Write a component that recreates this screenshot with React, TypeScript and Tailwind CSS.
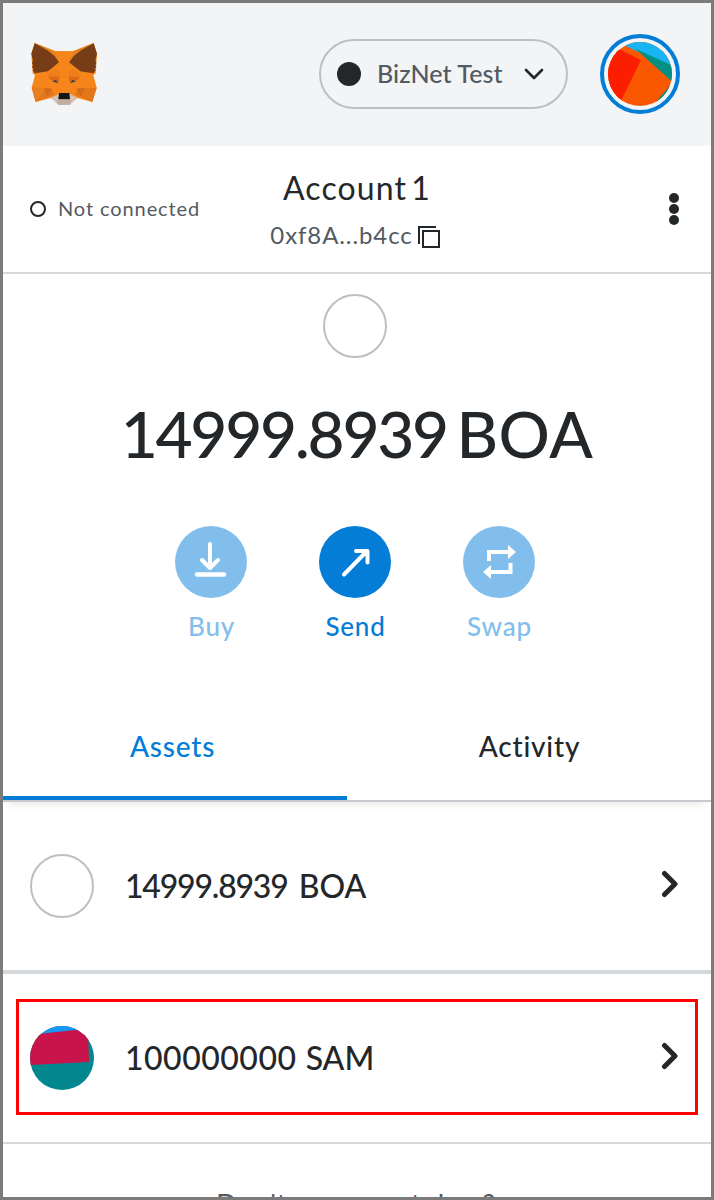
import type { ReactNode } from "react";

function Fox() {
  return (
    <svg className="h-[62px] w-[68px]" viewBox="95 69 204 186">
      <polygon fill="#f6851b" points="106,69 168,94 221,94 283,69 293,101 289,160 282,166 292,203 279,246 235,234 215,246 175,246 154,234 109,246 97,203 107,166 100,160 96,101" />
      <polygon fill="#e2761b" points="97,203 154,204 164,224 109,246" />
      <polygon fill="#e2761b" points="292,203 235,204 226,224 279,246" />
      <polygon fill="#f08a24" points="97,203 141,204 109,244" opacity=".5" />
      <polygon fill="#d66a1a" points="134,204 157,206 150,219 144,231" />
      <polygon fill="#d66a1a" points="255,204 232,206 239,219 245,231" />
      <polygon fill="#ee7f1b" points="141,169 164,146 182,150 182,172" />
      <polygon fill="#ee7f1b" points="247,169 224,146 207,150 207,172" />
      <polygon fill="#d86a18" points="146,170 181,170 177,188 155,181" />
      <polygon fill="#d86a18" points="243,170 208,170 212,188 234,181" />
      <polygon fill="#f6851b" points="168,94 221,94 210,127 207,165 213,219 176,219 182,165 178,127" />
      <polygon fill="#e8821e" points="106,69 168,94 178,127" />
      <polygon fill="#e8821e" points="283,69 221,94 210,127" />
      <polygon fill="#763d16" points="106,70 144,91 165,107 179,127 146,154 107,160 100,151 103,146 98,142 101,136 98,128 101,122 96,101" />
      <polygon fill="#763d16" points="283,70 245,91 224,107 209,127 243,154 282,160 289,151 286,146 291,142 288,136 291,128 288,122 293,101" />
      <polygon fill="#2d4054" points="159,184 170,180 176,190" />
      <polygon fill="#2d4054" points="230,184 219,180 213,190" />
      <polygon fill="#d7c1b3" points="154,233 178,222 212,222 235,233 215,251 209,255 180,255 173,251" />
      <polygon fill="#c0ad9e" points="173,240 216,240 213,254 176,254" />
      <polygon fill="#161616" points="179,219 210,219 212,238 177,238" />
    </svg>
  );
}

function Avatar() {
  return (
    <div className="flex size-20 items-center justify-center rounded-full border-4 border-[#037dd6]">
      <svg className="size-16 rounded-full" viewBox="0 0 64 64">
        <rect width="64" height="64" fill="#fa5800" />
        <path d="M10 0H64V24L27 8.5Z" fill="#18b5f2" />
        <path d="M27 6.500L64 23.500V39.500Z" fill="#048f83" />
        <path d="M64 41L47 61L64 64Z" fill="#048f83" />
        <path d="M0 0L12 7.500L33 18L13 59L0 64Z" fill="#fb1e00" />
      </svg>
    </div>
  );
}

function TokenIcon() {
  return (
    <svg className="size-16 rounded-full" viewBox="0 0 64 64">
      <rect width="64" height="64" fill="#03878f" />
      <path d="M0 0H60V4L0 9Z" fill="#1897f2" />
      <path d="M0 9L58 2.500L59 36L0 39Z" fill="#c8144b" />
    </svg>
  );
}

function Action({ label, labelClass, circleClass, children }: { label: string; labelClass: string; circleClass: string; children: ReactNode }) {
  return (
    <div className="flex w-[72px] flex-col items-center">
      <div className={`size-[72px] rounded-full ${circleClass}`}>
        <svg className="size-[72px]" viewBox="0 0 72 72" fill="none" stroke="white">
          {children}
        </svg>
      </div>
      <span className={`mt-3 pl-px text-[26px] leading-8 font-medium tracking-[0.8px] whitespace-nowrap ${labelClass}`}>{label}</span>
    </div>
  );
}

function Chevron() {
  return (
    <svg className="mb-1 h-7 w-[18px]" viewBox="0 0 18 28" fill="none" stroke="#24272a" strokeWidth="5" strokeLinecap="round" strokeLinejoin="round">
      <path d="M3.500 3.500L14 14L3.500 24.500" />
    </svg>
  );
}

export default function App() {
  return (
    <div className="flex h-[1200px] w-[714px] flex-col overflow-hidden border-[3px] border-[#7b7b7b] bg-white font-['Lato',sans-serif] text-[#24272a]">
      <header className="flex h-[143px] shrink-0 items-center bg-[#f2f4f6] pr-[31px] pb-[2px] pl-[28px]">
        <Fox />
        <div className="mr-8 ml-auto flex h-[70px] w-[249px] items-center rounded-full border-2 border-[#bbc0c5] pl-4">
          <span className="size-6 rounded-full bg-[#24272a]" />
          <span className="ml-4 w-[126px] text-[25px] font-medium tracking-[0.1px] whitespace-nowrap text-[#535a61]">BizNet Test</span>
          <svg className="ml-[21px] h-3 w-5" viewBox="0 0 20 12" fill="none" stroke="#24272a" strokeWidth="2.600" strokeLinecap="round" strokeLinejoin="round">
            <path d="M2 2L10 10L18 2" />
          </svg>
        </div>
        <Avatar />
      </header>

      <section className="grid h-32 shrink-0 grid-cols-[220px_1fr_220px] border-b-2 border-[#d6d9dc]">
        <div className="flex items-center pl-[27px]">
          <span className="size-4 rounded-full border-2 border-[#24272a]" />
          <span className="ml-3 pb-[2px] text-[20px] tracking-[0.9px] whitespace-nowrap text-[#535a61]">Not connected</span>
        </div>
        <div className="flex flex-col items-center pt-[22px]">
          <span className="text-[32px] leading-10 tracking-[1.100px] [word-spacing:-5px]">Account 1</span>
          <div className="mt-[7px] mr-1 flex items-center gap-[5px]">
            <span className="text-[24px] leading-10 tracking-[0.9px] text-[#535a61]">0xf8A...b4cc</span>
            <svg className="mt-1 size-[22px]" viewBox="0 0 22 22" fill="none" stroke="#24272a" strokeWidth="2">
              <path d="M1 18V1H18" />
              <rect x="5" y="5" width="16" height="16" />
            </svg>
          </div>
        </div>
        <div className="flex flex-col items-end justify-center gap-px pr-8">
          <span className="size-[10px] rounded-full bg-[#24272a]" />
          <span className="size-[10px] rounded-full bg-[#24272a]" />
          <span className="size-[10px] rounded-full bg-[#24272a]" />
        </div>
      </section>

      <section className="flex h-[412px] shrink-0 flex-col items-center pt-5">
        <span className="mr-[4px] size-16 rounded-full border-2 border-[#bbc0c5]" />
        <div className="mt-[36px] text-[64px] leading-20 font-medium whitespace-nowrap">
          <span className="tracking-[-2.300px]">14999.8939</span>
          <span className="tracking-[0.5px] [word-spacing:-7px]"> BOA</span>
        </div>
        <div className="mt-[52px] mr-[4px] flex gap-[72px]">
          <Action label="Buy" labelClass="text-[#81beeb]" circleClass="bg-[#81beeb]">
            <path d="M35 18V41M27 34L35 42L43 34" strokeWidth="4" strokeLinecap="round" strokeLinejoin="round" />
            <path d="M22 48.500H49" strokeWidth="4.500" strokeLinecap="round" />
          </Action>
          <Action label="Send" labelClass="text-[#037dd6]" circleClass="bg-[#037dd6]">
            <path d="M25 48.500L48 25M37 25H48.500V36.500" strokeWidth="4" strokeLinecap="round" strokeLinejoin="round" />
          </Action>
          <Action label="Swap" labelClass="text-[#81beeb]" circleClass="bg-[#81beeb]">
            <path d="M26 35V26H47M47.500 37V46H26" strokeWidth="4" />
            <path d="M45 19L53 26L45 33ZM28 39L20 46L28 53Z" fill="white" stroke="none" />
          </Action>
        </div>
      </section>

      <nav className="relative z-10 flex h-[116px] shrink-0 border-b-2 border-[#c6cacf] text-[28px] font-medium tracking-[0.8px] shadow-[0_8px_8px_-6px_rgba(0,0,0,0.10)]">
        <div className="flex w-[344px] items-start justify-center border-b-4 border-[#037dd6] pt-10 leading-10 text-[#037dd6]">
          <span className="mr-[5px]">Assets</span>
        </div>
        <div className="flex flex-1 items-start justify-center pt-10 pl-px leading-10">Activity</div>
      </nav>

      <main>
        <div className="flex h-[172px] items-center border-b-4 border-[#d6d9dc] pr-8 pl-[27px]">
          <span className="size-16 rounded-full border-2 border-[#bbc0c5]" />
          <div className="ml-[31px] flex-1 text-[32px] font-medium whitespace-nowrap">
            <span className="tracking-[-1.200px]">14999.8939</span>
            <span className="[word-spacing:3px]"> BOA</span>
          </div>
          <Chevron />
        </div>
        <div className="h-[170px] border-b-2 border-[#d6d9dc] pt-[25px] pr-[13px] pl-[13px]">
          <div className="flex h-[116px] items-center border-3 border-[#ff0000] pt-px pr-4 pl-[11px]">
            <TokenIcon />
            <div className="ml-[31px] flex-1 text-[32px] font-medium whitespace-nowrap">
              <span className="tracking-[0.5px]">100000000</span>
              <span className="[word-spacing:1px]"> SAM</span>
            </div>
            <Chevron />
          </div>
        </div>
        <div className="pt-10 pr-[2px] text-center text-[28px] leading-10 tracking-[0.6px] text-[#535a61]">Don't see your token?</div>
      </main>
    </div>
  );
}
